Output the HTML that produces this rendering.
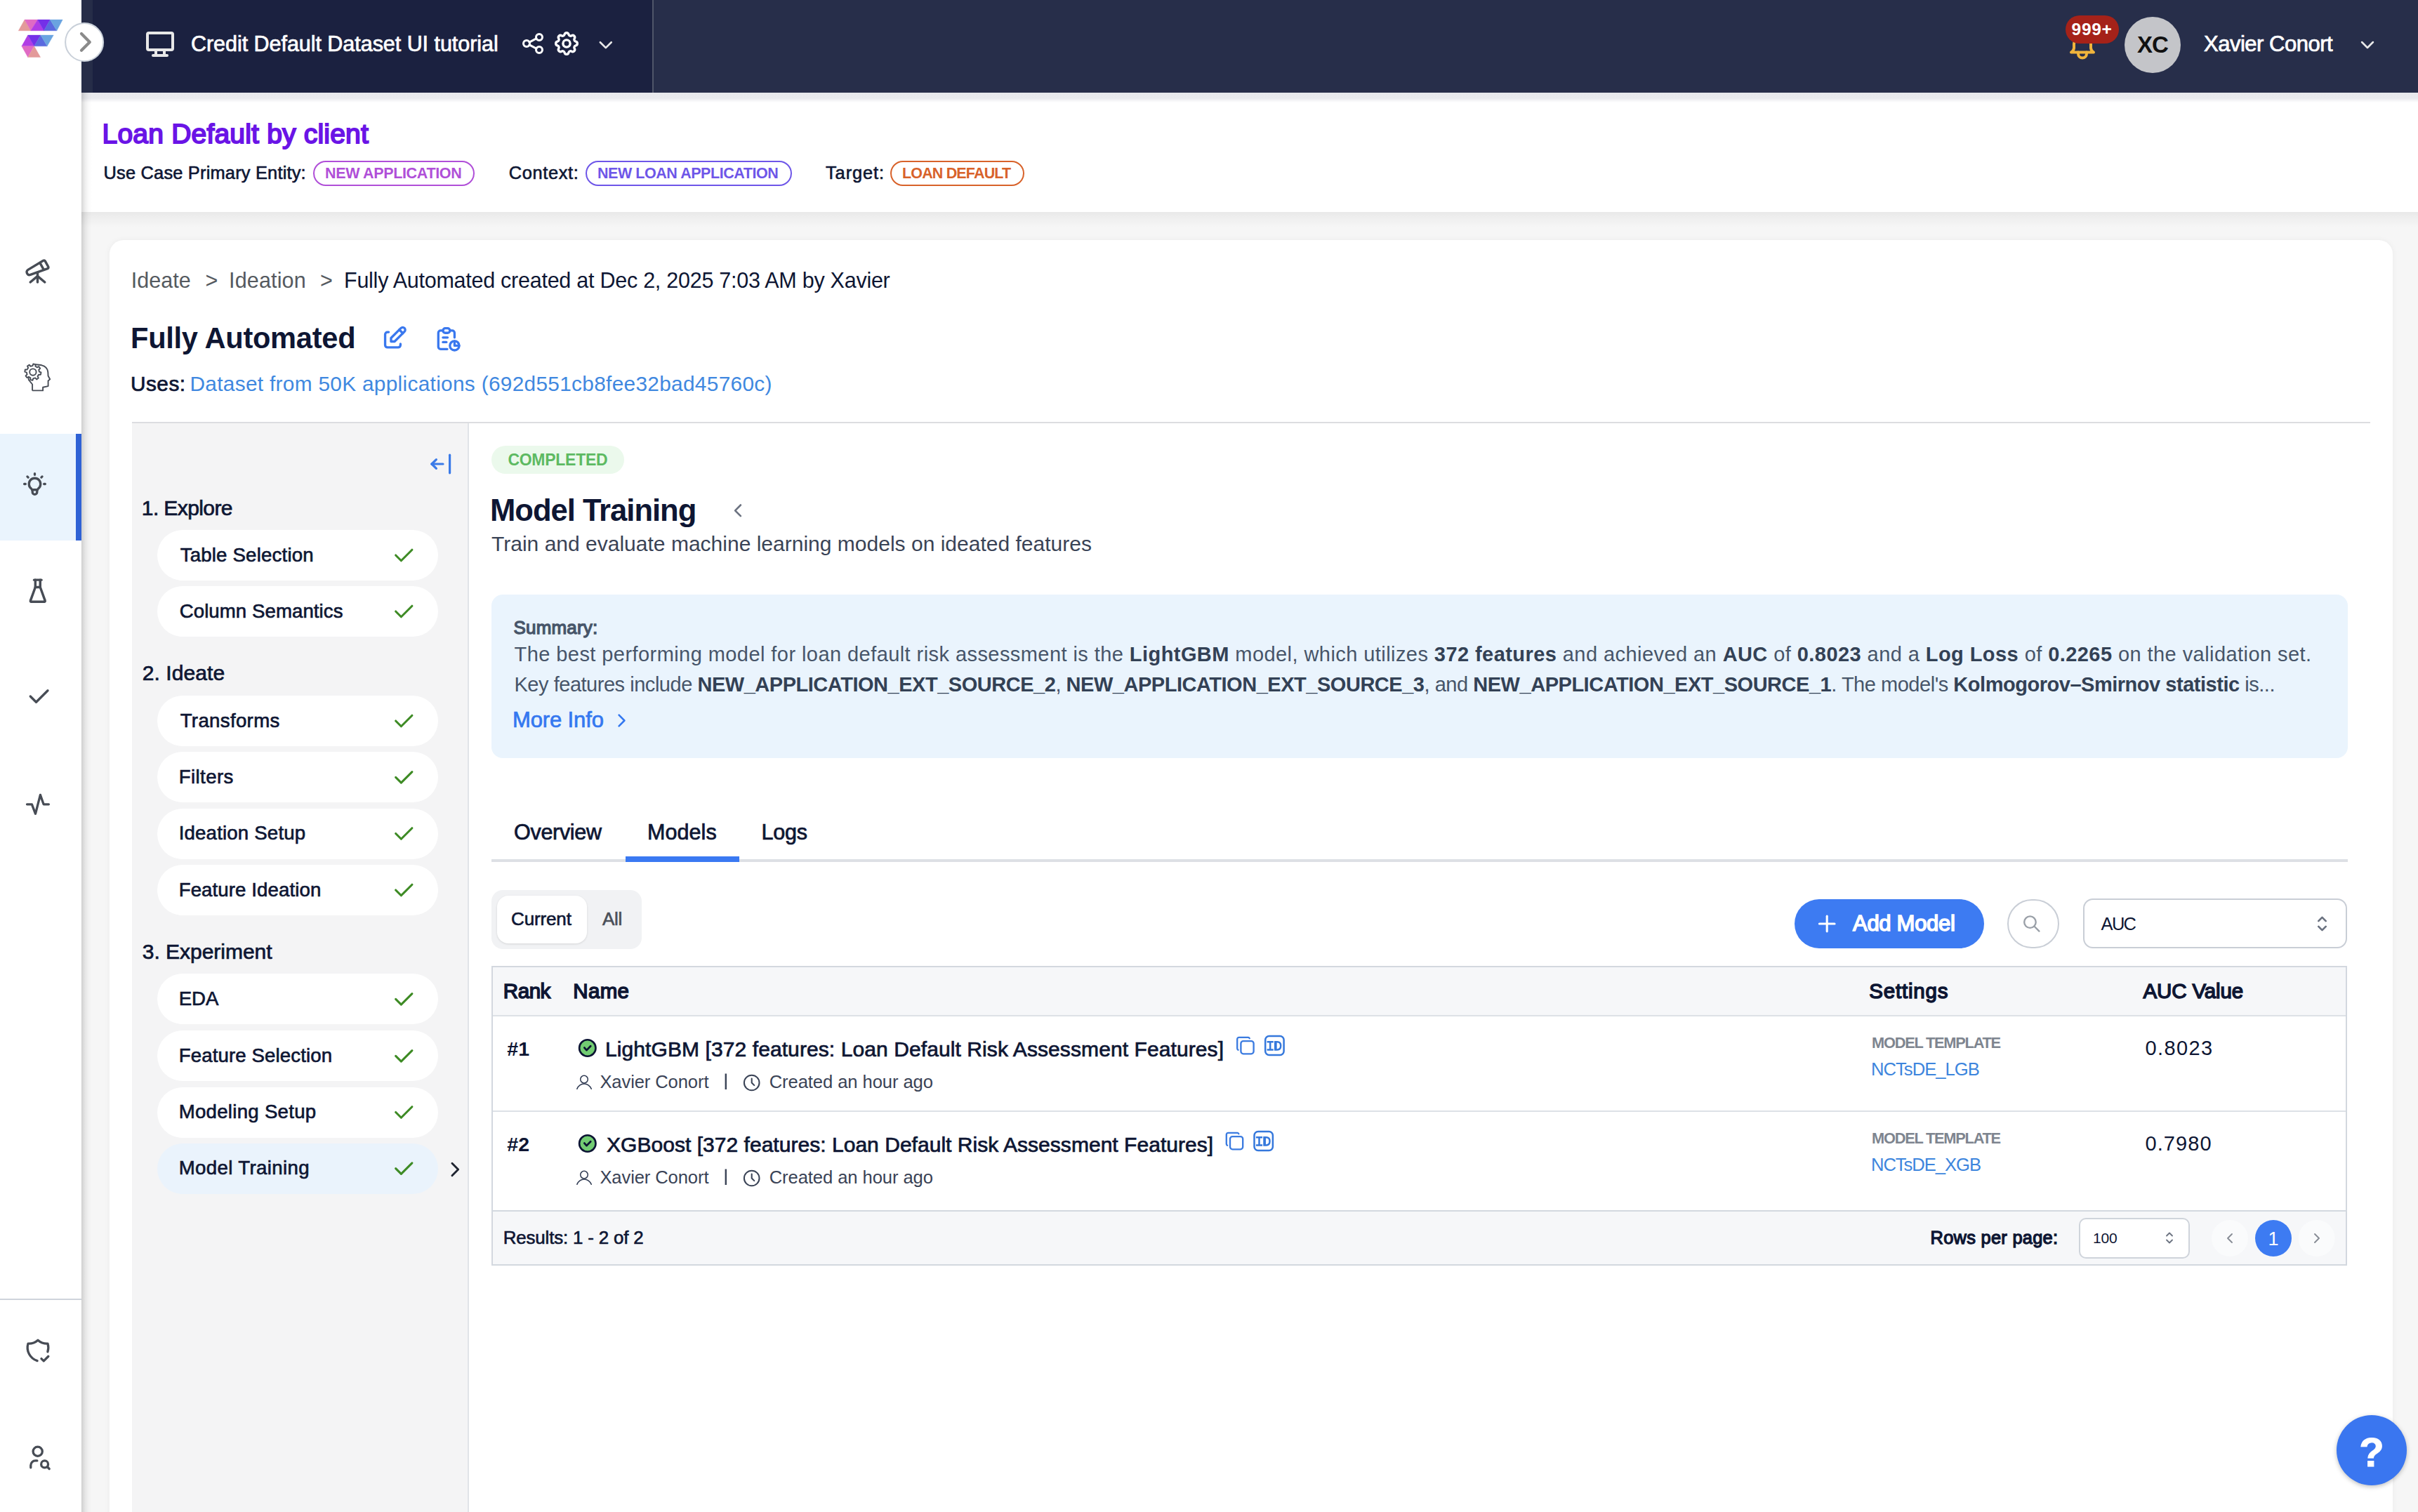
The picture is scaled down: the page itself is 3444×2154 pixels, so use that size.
<!DOCTYPE html>
<html><head><meta charset="utf-8"><style>
html,body{margin:0;padding:0;width:3444px;height:2154px;overflow:hidden;background:#f6f6f6}
body{position:relative;font-family:"Liberation Sans",sans-serif}
.b{position:absolute}
.t{position:absolute;line-height:0;white-space:nowrap}
.ov{position:absolute;left:0;top:0}
</style></head><body>

<div class="b" style="left:0;top:0;width:3444px;height:2154px;background:#f6f6f6"></div>
<div class="b" style="left:156px;top:342px;width:3252px;height:1900px;background:#fff;border-radius:20px;box-shadow:0 0 8px rgba(0,0,0,0.05)"></div>
<div class="b" style="left:116px;top:132px;width:3328px;height:170px;background:#fff"></div>
<div class="b" style="left:116px;top:302px;width:3328px;height:22px;background:linear-gradient(to bottom,rgba(0,0,0,0.055) 0,rgba(0,0,0,0.03) 8px,rgba(0,0,0,0) 22px)"></div>
<div class="b" style="left:116px;top:0;width:3328px;height:132px;background:#1b2140"></div>
<div class="b" style="left:116px;top:132px;width:3328px;height:14px;background:linear-gradient(to bottom,#e7e8ec 0,#e9eaee 8px,rgba(236,237,240,0) 14px)"></div>
<div class="b" style="left:116px;top:0;width:16px;height:132px;background:#262d48"></div>
<div class="b" style="left:931px;top:0;width:2513px;height:132px;background:#272e4a"></div>
<div class="b" style="left:929px;top:0;width:2px;height:132px;background:#50566a"></div>
<div class="b" style="left:0;top:0;width:116px;height:2154px;background:#fff"></div>
<div class="b" style="left:116px;top:132px;width:16px;height:2022px;background:linear-gradient(to right,rgba(0,0,0,0.16) 0,rgba(0,0,0,0.07) 5px,rgba(0,0,0,0.02) 10px,rgba(0,0,0,0) 15px)"></div>
<div class="b" style="left:0;top:617.5px;width:108px;height:152px;background:#eaf4fd"></div>
<div class="b" style="left:108px;top:617.5px;width:8px;height:152px;background:#2f62d5"></div>
<div class="b" style="left:0;top:1849.5px;width:116px;height:2px;background:#cfd4dc"></div>
<!-- badges -->
<div class="b" style="left:446px;top:229px;width:230px;height:36px;border:2.4px solid #b04fd8;border-radius:20px;box-sizing:border-box"></div>
<div class="b" style="left:834px;top:229px;width:293.5px;height:36px;border:2.4px solid #6e56e8;border-radius:20px;box-sizing:border-box"></div>
<div class="b" style="left:1268px;top:229px;width:190.6px;height:36px;border:2.4px solid #d8622a;border-radius:20px;box-sizing:border-box"></div>
<!-- card divider and stepper panel -->
<div class="b" style="left:188px;top:600.5px;width:3188px;height:2px;background:#dcdde0"></div>
<div class="b" style="left:188px;top:602.5px;width:478px;height:1600px;background:#f4f4f5"></div>
<div class="b" style="left:665.5px;top:602.5px;width:2.5px;height:1600px;background:#e1e4e8"></div>
<div class="b" style="left:223.6px;top:755.0px;width:400px;height:72px;border-radius:36px;background:#ffffff"></div>
<div class="b" style="left:223.6px;top:835.0px;width:400px;height:72px;border-radius:36px;background:#ffffff"></div>
<div class="b" style="left:223.6px;top:991.0px;width:400px;height:72px;border-radius:36px;background:#ffffff"></div>
<div class="b" style="left:223.6px;top:1071.3px;width:400px;height:72px;border-radius:36px;background:#ffffff"></div>
<div class="b" style="left:223.6px;top:1151.5px;width:400px;height:72px;border-radius:36px;background:#ffffff"></div>
<div class="b" style="left:223.6px;top:1232.0px;width:400px;height:72px;border-radius:36px;background:#ffffff"></div>
<div class="b" style="left:223.6px;top:1387.3px;width:400px;height:72px;border-radius:36px;background:#ffffff"></div>
<div class="b" style="left:223.6px;top:1468.3px;width:400px;height:72px;border-radius:36px;background:#ffffff"></div>
<div class="b" style="left:223.6px;top:1548.5px;width:400px;height:72px;border-radius:36px;background:#ffffff"></div>
<div class="b" style="left:223.6px;top:1628.7px;width:400px;height:72px;border-radius:36px;background:#eaf3fc"></div>

<div class="b" style="left:700px;top:635px;width:188.6px;height:39.6px;border-radius:20px;background:#ebf9ec"></div>
<div class="b" style="left:700px;top:847px;width:2644px;height:233px;border-radius:16px;background:#eaf4fd"></div>
<div class="b" style="left:700px;top:1224px;width:2644px;height:4px;background:#dde0e5"></div>
<div class="b" style="left:891px;top:1220px;width:162px;height:8px;background:#3a79f2"></div>
<div class="b" style="left:700px;top:1268px;width:214px;height:84px;border-radius:16px;background:#f1f2f4"></div>
<div class="b" style="left:708px;top:1276px;width:128px;height:68px;border-radius:16px;background:#fff;box-shadow:0 1px 3px rgba(0,0,0,0.12)"></div>
<div class="b" style="left:2556px;top:1281px;width:270px;height:70px;border-radius:35px;background:#3d7bf2"></div>
<div class="b" style="left:2858.5px;top:1281px;width:74.5px;height:70px;border-radius:37px;border:2px solid #c9ced6;box-sizing:border-box;background:#fff"></div>
<div class="b" style="left:2966.5px;top:1280px;width:376.5px;height:71px;border-radius:14px;border:2px solid #c9ced6;box-sizing:border-box;background:#fff"></div>
<!-- table -->
<div class="b" style="left:700px;top:1376px;width:2643px;height:427px;border:2px solid #d3d8df;box-sizing:border-box;background:#fff"></div>
<div class="b" style="left:702px;top:1378px;width:2639px;height:68px;background:#f6f7f9"></div>
<div class="b" style="left:702px;top:1446px;width:2639px;height:2px;background:#dde1e6"></div>
<div class="b" style="left:702px;top:1581.6px;width:2639px;height:2px;background:#dde1e6"></div>
<div class="b" style="left:702px;top:1724px;width:2639px;height:2px;background:#d3d8df"></div>
<div class="b" style="left:702px;top:1726px;width:2639px;height:75px;background:#f6f7f9"></div>
<div class="b" style="left:2960.5px;top:1734.5px;width:158.5px;height:58.5px;border-radius:10px;border:2px solid #cfd4db;box-sizing:border-box;background:#fff"></div>
<!-- help -->
<div class="b" style="left:3328px;top:2016px;width:100px;height:100px;border-radius:50px;background:#3a76f0;box-shadow:0 2px 6px rgba(0,0,0,0.25)"></div>

<svg class="ov" width="3444" height="2154" viewBox="0 0 3444 2154"><path d="M26.25 43.8 L35.05 28.1 L43.8 43.8 Z" fill="#e39a9a" stroke="#e39a9a" stroke-width="0.4"/>
<path d="M35.05 28.1 L53.6 28.1 L43.8 43.8 Z" fill="#e06ac4" stroke="#e06ac4" stroke-width="0.4"/>
<path d="M43.8 43.8 L53.6 28.1 L62.6 43.8 Z" fill="#b03de5" stroke="#b03de5" stroke-width="0.4"/>
<path d="M53.6 28.1 L71.4 28.1 L62.6 43.8 Z" fill="#7430e8" stroke="#7430e8" stroke-width="0.4"/>
<path d="M62.6 43.8 L71.4 28.1 L80.9 43.8 Z" fill="#5a6adf" stroke="#5a6adf" stroke-width="0.4"/>
<path d="M71.4 28.1 L89.2 28.1 L80.9 43.8 Z" fill="#6aa4e0" stroke="#6aa4e0" stroke-width="0.4"/>
<path d="M30.9 65.8 L39.7 50.1 L48.7 65.8 Z" fill="#b03de5" stroke="#b03de5" stroke-width="0.4"/>
<path d="M39.7 50.1 L58 50.1 L48.7 65.8 Z" fill="#7430e8" stroke="#7430e8" stroke-width="0.4"/>
<path d="M48.7 65.8 L58 50.1 L67.2 65.8 Z" fill="#5a6adf" stroke="#5a6adf" stroke-width="0.4"/>
<path d="M58 50.1 L76.25 50.1 L67.2 65.8 Z" fill="#6aa4e0" stroke="#6aa4e0" stroke-width="0.4"/>
<path d="M30.9 65.8 L48.7 65.8 L39.7 81.6 Z" fill="#e06ac4" stroke="#e06ac4" stroke-width="0.4"/>
<path d="M48.7 65.8 L39.7 81.6 L57.6 81.6 Z" fill="#e39a9a" stroke="#e39a9a" stroke-width="0.4"/>
<circle cx="120.1" cy="60" r="27" fill="#fff" stroke="#c9d0d9" stroke-width="2"/>
<path d="M116 48.1 L127.8 60 L116 71.8" fill="none" stroke="#8a8a8a" stroke-width="4.2" stroke-linecap="round" stroke-linejoin="round"/>
<g transform="translate(204.00 39.00) scale(2.0000)" fill="none" stroke="#e8e8e8" stroke-width="2" stroke-linecap="round" stroke-linejoin="round" ><path d="M3 5a1 1 0 0 1 1 -1h16a1 1 0 0 1 1 1v10a1 1 0 0 1 -1 1h-16a1 1 0 0 1 -1 -1v-10z"/><path d="M7 20h10"/><path d="M9 16v4"/><path d="M15 16v4"/></g>
<g transform="translate(741.00 44.00) scale(1.5000)" fill="none" stroke="#ffffff" stroke-width="2" stroke-linecap="round" stroke-linejoin="round" ><path d="M6 12m-3 0a3 3 0 1 0 6 0a3 3 0 1 0 -6 0"/><path d="M18 6m-3 0a3 3 0 1 0 6 0a3 3 0 1 0 -6 0"/><path d="M18 18m-3 0a3 3 0 1 0 6 0a3 3 0 1 0 -6 0"/><path d="M8.7 10.7l6.6 -3.4"/><path d="M8.7 13.3l6.6 3.4"/></g>
<g transform="translate(786.60 41.60) scale(1.7000)" fill="none" stroke="#ffffff" stroke-width="2" stroke-linecap="round" stroke-linejoin="round" ><path d="M10.325 4.317c.426 -1.756 2.924 -1.756 3.35 0a1.724 1.724 0 0 0 2.573 1.066c1.543 -.94 3.31 .826 2.37 2.37a1.724 1.724 0 0 0 1.065 2.572c1.756 .426 1.756 2.924 0 3.35a1.724 1.724 0 0 0 -1.066 2.573c.94 1.543 -.826 3.31 -2.37 2.37a1.724 1.724 0 0 0 -2.572 1.065c-.426 1.756 -2.924 1.756 -3.35 0a1.724 1.724 0 0 0 -2.573 -1.066c-1.543 .94 -3.31 -.826 -2.37 -2.37a1.724 1.724 0 0 0 -1.065 -2.572c-1.756 -.426 -1.756 -2.924 0 -3.35a1.724 1.724 0 0 0 1.066 -2.573c-.94 -1.543 .826 -3.31 2.37 -2.37c1 .608 2.296 .07 2.572 -1.065z"/><path d="M9 12a3 3 0 1 0 6 0a3 3 0 0 0 -6 0"/></g>
<g transform="translate(846.96 48.36) scale(1.3200)" fill="none" stroke="#e8e8e8" stroke-width="2" stroke-linecap="round" stroke-linejoin="round" ><path d="M6 9l6 6l6 -6"/></g>
<g transform="translate(3356.16 48.16) scale(1.3200)" fill="none" stroke="#e8e8e8" stroke-width="2" stroke-linecap="round" stroke-linejoin="round" ><path d="M6 9l6 6l6 -6"/></g>
<g transform="translate(2942.00 40.50) scale(2.0000)" fill="none" stroke="#f0b43c" stroke-width="2" stroke-linecap="round" stroke-linejoin="round" ><path d="M10 5a2 2 0 1 1 4 0a7 7 0 0 1 4 6v3a4 4 0 0 0 2 3h-16a4 4 0 0 0 2 -3v-3a7 7 0 0 1 4 -6"/><path d="M9 17v1a3 3 0 0 0 6 0v-1"/></g>
<rect x="2942" y="22" width="76" height="40" rx="20" fill="#a52219"/>
<circle cx="3066" cy="64" r="40" fill="#c4c5c9"/>
<g transform="translate(32.86 365.86) scale(1.7200)" fill="none" stroke="#474c55" stroke-width="2" stroke-linecap="round" stroke-linejoin="round" ><path d="M6 21l6 -5l6 5"/><path d="M12 13v8"/><path d="M3.294 13.678l.166 .281c.52 .88 1.624 1.265 2.605 .91l14.242 -5.165a1.023 1.023 0 0 0 .565 -1.456l-2.62 -4.705a1.087 1.087 0 0 0 -1.447 -.42l-.056 .032l-12.694 7.618c-1.02 .613 -1.357 1.897 -.76 2.905z"/><path d="M14 5l3 5.5"/></g>
<path d="M46.1 556.4 V547.5 L40.9 541.1 L40.3 537.7" fill="none" stroke="#474c55" stroke-width="1.9" stroke-linejoin="round"/>
<path d="M50.4 519.2 C54 519.5 57 519.8 59.4 520.3 C64.5 521.5 67.5 525 68.2 529.5 C68.6 532 68.4 534 68.6 535.5 L71.2 540.2 L68.6 542.4 L68.6 550.1 L61.1 551.8 L61.1 556.4 L46.1 556.4" fill="none" stroke="#474c55" stroke-width="1.9" stroke-linejoin="round"/>
<path d="M55.89 529.63 L58.49 530.50 L57.93 533.68 L55.18 533.62 L53.59 536.12 L54.81 538.58 L52.17 540.44 L50.27 538.44 L47.37 539.09 L46.50 541.69 L43.32 541.13 L43.38 538.38 L40.88 536.79 L38.42 538.01 L36.56 535.37 L38.56 533.47 L37.91 530.57 L35.31 529.70 L35.87 526.52 L38.62 526.58 L40.21 524.08 L38.99 521.62 L41.63 519.76 L43.53 521.76 L46.43 521.11 L47.30 518.51 L50.48 519.07 L50.42 521.82 L52.92 523.41 L55.38 522.19 L57.24 524.83 L55.24 526.73 Z" fill="#fff" stroke="#474c55" stroke-width="1.9" stroke-linejoin="round"/>
<circle cx="46.9" cy="530.1" r="4.7" fill="none" stroke="#474c55" stroke-width="1.9"/>
<g transform="translate(29.70 669.70) scale(1.6500)" fill="none" stroke="#474c55" stroke-width="2" stroke-linecap="round" stroke-linejoin="round" ><path d="M3 12h1m8 -9v1m8 8h1m-15.4 -6.4l.7 .7m12.1 -.7l-.7 .7"/><path d="M9 16a5 5 0 1 1 6 0a3.5 3.5 0 0 0 -1 3a2 2 0 0 1 -4 0a3.5 3.5 0 0 0 -1 -3"/><path d="M9.7 17l4.6 0"/></g>
<g transform="translate(33.04 820.94) scale(1.7300)" fill="none" stroke="#474c55" stroke-width="2" stroke-linecap="round" stroke-linejoin="round" ><path d="M9 3l6 0"/><path d="M10 9l4 0"/><path d="M10 3v6l-4 11a.7 .7 0 0 0 .5 1h11a.7 .7 0 0 0 .5 -1l-4 -11v-6"/></g>
<g transform="translate(35.00 972.20) scale(1.6500)" fill="none" stroke="#474c55" stroke-width="2" stroke-linecap="round" stroke-linejoin="round" ><path d="M5 12l5 5l10 -10"/></g>
<path d="M38.5 1145.8 H45.4 L50.5 1159.3 L57.4 1132.4 L62.1 1145.8 H69.4" fill="none" stroke="#474c55" stroke-width="3.3" stroke-linecap="round" stroke-linejoin="round"/>
<g transform="translate(34.20 1904.20) scale(1.6500)" fill="none" stroke="#474c55" stroke-width="2" stroke-linecap="round" stroke-linejoin="round" ><path d="M11.46 20.846a12 12 0 0 1 -7.96 -14.846a12 12 0 0 0 8.5 -3a12 12 0 0 0 8.5 3a12 12 0 0 1 -.09 7.06"/><path d="M15 19l2 2l4 -4"/></g>
<g transform="translate(33.90 2056.20) scale(1.6500)" fill="none" stroke="#474c55" stroke-width="2" stroke-linecap="round" stroke-linejoin="round" ><path d="M8 7a4 4 0 1 0 8 0a4 4 0 0 0 -8 0"/><path d="M6 21v-2a4 4 0 0 1 4 -4h1.5"/><path d="M18 18m-3 0a3 3 0 1 0 6 0a3 3 0 1 0 -6 0"/><path d="M20.2 20.2l1.8 1.8"/></g>
<g transform="translate(541.84 461.34) scale(1.6800)" fill="none" stroke="#3a78ee" stroke-width="2" stroke-linecap="round" stroke-linejoin="round" ><path d="M7 7h-1a2 2 0 0 0 -2 2v9a2 2 0 0 0 2 2h9a2 2 0 0 0 2 -2v-1"/><path d="M20.385 6.585a2.1 2.1 0 0 0 -2.97 -2.97l-8.415 8.385v3h3l8.415 -8.415z"/><path d="M16 5l3 3"/></g>
<g transform="translate(617.70 462.70) scale(1.6500)" fill="none" stroke="#3a78ee" stroke-width="2" stroke-linecap="round" stroke-linejoin="round" ><path d="M8 5h-2a2 2 0 0 0 -2 2v12a2 2 0 0 0 2 2h5.697"/><path d="M18 14v4h4"/><path d="M18 11v-4a2 2 0 0 0 -2 -2h-2"/><path d="M8 3m0 2a2 2 0 0 1 2 -2h2a2 2 0 0 1 2 2v0a2 2 0 0 1 -2 2h-2a2 2 0 0 1 -2 -2z"/><path d="M18 18m-4 0a4 4 0 1 0 8 0a4 4 0 1 0 -8 0"/><path d="M8 11h4"/><path d="M8 15h3"/></g>
<g transform="translate(608.60 641.80) scale(1.6000)" fill="none" stroke="#3b7be8" stroke-width="2" stroke-linecap="round" stroke-linejoin="round" ><path d="M4 12l10 0"/><path d="M4 12l4 4"/><path d="M4 12l4 -4"/><path d="M20 4l0 16"/></g>
<g transform="translate(555.90 772.40) scale(1.5500)" fill="none" stroke="#3e8b25" stroke-width="2" stroke-linecap="round" stroke-linejoin="round" ><path d="M5 12l5 5l10 -10"/></g>
<g transform="translate(555.90 852.40) scale(1.5500)" fill="none" stroke="#3e8b25" stroke-width="2" stroke-linecap="round" stroke-linejoin="round" ><path d="M5 12l5 5l10 -10"/></g>
<g transform="translate(555.90 1008.40) scale(1.5500)" fill="none" stroke="#3e8b25" stroke-width="2" stroke-linecap="round" stroke-linejoin="round" ><path d="M5 12l5 5l10 -10"/></g>
<g transform="translate(555.90 1088.70) scale(1.5500)" fill="none" stroke="#3e8b25" stroke-width="2" stroke-linecap="round" stroke-linejoin="round" ><path d="M5 12l5 5l10 -10"/></g>
<g transform="translate(555.90 1168.90) scale(1.5500)" fill="none" stroke="#3e8b25" stroke-width="2" stroke-linecap="round" stroke-linejoin="round" ><path d="M5 12l5 5l10 -10"/></g>
<g transform="translate(555.90 1249.40) scale(1.5500)" fill="none" stroke="#3e8b25" stroke-width="2" stroke-linecap="round" stroke-linejoin="round" ><path d="M5 12l5 5l10 -10"/></g>
<g transform="translate(555.90 1404.70) scale(1.5500)" fill="none" stroke="#3e8b25" stroke-width="2" stroke-linecap="round" stroke-linejoin="round" ><path d="M5 12l5 5l10 -10"/></g>
<g transform="translate(555.90 1485.70) scale(1.5500)" fill="none" stroke="#3e8b25" stroke-width="2" stroke-linecap="round" stroke-linejoin="round" ><path d="M5 12l5 5l10 -10"/></g>
<g transform="translate(555.90 1565.90) scale(1.5500)" fill="none" stroke="#3e8b25" stroke-width="2" stroke-linecap="round" stroke-linejoin="round" ><path d="M5 12l5 5l10 -10"/></g>
<g transform="translate(555.90 1646.10) scale(1.5500)" fill="none" stroke="#3e8b25" stroke-width="2" stroke-linecap="round" stroke-linejoin="round" ><path d="M5 12l5 5l10 -10"/></g>
<g transform="translate(630.90 1648.60) scale(1.4500)" fill="none" stroke="#1f2430" stroke-width="2" stroke-linecap="round" stroke-linejoin="round" ><path d="M9 6l6 6l-6 6"/></g>
<g transform="translate(1035.40 711.70) scale(1.3000)" fill="none" stroke="#6b7280" stroke-width="2" stroke-linecap="round" stroke-linejoin="round" ><path d="M15 6l-6 6l6 6"/></g>
<g transform="translate(869.90 1010.90) scale(1.3000)" fill="none" stroke="#3478f0" stroke-width="2" stroke-linecap="round" stroke-linejoin="round" ><path d="M9 6l6 6l-6 6"/></g>
<g transform="translate(2583.60 1297.40) scale(1.5500)" fill="none" stroke="#ffffff" stroke-width="2" stroke-linecap="round" stroke-linejoin="round" ><path d="M12 5l0 14"/><path d="M5 12l14 0"/></g>
<g transform="translate(2879.64 1301.84) scale(1.1800)" fill="none" stroke="#9aa0a8" stroke-width="2" stroke-linecap="round" stroke-linejoin="round" ><path d="M10 10m-7 0a7 7 0 1 0 14 0a7 7 0 1 0 -14 0"/><path d="M21 21l-6 -6"/></g>
<g transform="translate(3291.90 1300.40) scale(1.3000)" fill="none" stroke="#6b7280" stroke-width="2" stroke-linecap="round" stroke-linejoin="round" ><path d="M8 9l4 -4l4 4"/><path d="M16 15l-4 4l-4 -4"/></g>
<circle cx="836.8" cy="1493.0" r="11.7" fill="#72cc72" stroke="#0c1433" stroke-width="2.6"/>
<path d="M832.4 1492.6 L835.5 1496.1 L841.2 1490.2" fill="none" stroke="#0c1433" stroke-width="2.8" stroke-linecap="round" stroke-linejoin="round"/>
<circle cx="832" cy="1537.6" r="5.3" fill="none" stroke="#2f3a52" stroke-width="1.5"/>
<path d="M821.9 1551.2 C824 1546.5 828 1544.0 832 1544.0 C836 1544.0 840 1546.5 842.2 1551.2" fill="none" stroke="#2f3a52" stroke-width="1.6" stroke-linecap="round"/>
<rect x="1032.6" y="1529.5" width="2.4" height="22.5" fill="#3a4356"/>
<g transform="translate(1056.30 1528.10) scale(1.2000)" fill="none" stroke="#3a4356" stroke-width="1.7" stroke-linecap="round" stroke-linejoin="round" ><path d="M3 12a9 9 0 1 0 18 0a9 9 0 0 0 -18 0"/><path d="M12 7v5l3 3"/></g>
<circle cx="836.8" cy="1629.0" r="11.7" fill="#72cc72" stroke="#0c1433" stroke-width="2.6"/>
<path d="M832.4 1628.6 L835.5 1632.1 L841.2 1626.2" fill="none" stroke="#0c1433" stroke-width="2.8" stroke-linecap="round" stroke-linejoin="round"/>
<circle cx="832" cy="1673.6" r="5.3" fill="none" stroke="#2f3a52" stroke-width="1.5"/>
<path d="M821.9 1687.2 C824 1682.5 828 1680.0 832 1680.0 C836 1680.0 840 1682.5 842.2 1687.2" fill="none" stroke="#2f3a52" stroke-width="1.6" stroke-linecap="round"/>
<rect x="1032.6" y="1665.5" width="2.4" height="22.5" fill="#3a4356"/>
<g transform="translate(1056.30 1664.10) scale(1.2000)" fill="none" stroke="#3a4356" stroke-width="1.7" stroke-linecap="round" stroke-linejoin="round" ><path d="M3 12a9 9 0 1 0 18 0a9 9 0 0 0 -18 0"/><path d="M12 7v5l3 3"/></g>
<g transform="translate(1758.30 1474.00) scale(1.3000)" fill="none" stroke="#3b7be0" stroke-width="1.8" stroke-linecap="round" stroke-linejoin="round" ><path d="M7 7m0 2.667a2.667 2.667 0 0 1 2.667 -2.667h8.666a2.667 2.667 0 0 1 2.667 2.667v8.666a2.667 2.667 0 0 1 -2.667 2.667h-8.666a2.667 2.667 0 0 1 -2.667 -2.667z"/><path d="M4.012 16.737a2.005 2.005 0 0 1 -1.012 -1.737v-10c0 -1.1 .9 -2 2 -2h10c.75 0 1.158 .385 1.5 1"/></g>
<rect x="1802.2" y="1476.1" width="26.4" height="26.8" rx="5.5" fill="none" stroke="#3578dc" stroke-width="2.5"/>
<g transform="translate(0.0 0.0)" fill="none" stroke="#3578dc" stroke-width="2.5" stroke-linecap="butt"><path d="M1804.6 1484.2 H1813.8 M1804.6 1495.4 H1813.8 M1809.2 1484.2 V1495.4"/><path d="M1816.2 1484.2 H1819.2 Q1824.2 1484.2 1824.2 1489.8 Q1824.2 1495.4 1819.2 1495.4 H1816.2 Z M1817.4 1484.2 V1495.4"/></g>
<g transform="translate(1742.90 1610.00) scale(1.3000)" fill="none" stroke="#3b7be0" stroke-width="1.8" stroke-linecap="round" stroke-linejoin="round" ><path d="M7 7m0 2.667a2.667 2.667 0 0 1 2.667 -2.667h8.666a2.667 2.667 0 0 1 2.667 2.667v8.666a2.667 2.667 0 0 1 -2.667 2.667h-8.666a2.667 2.667 0 0 1 -2.667 -2.667z"/><path d="M4.012 16.737a2.005 2.005 0 0 1 -1.012 -1.737v-10c0 -1.1 .9 -2 2 -2h10c.75 0 1.158 .385 1.5 1"/></g>
<rect x="1786.5" y="1612.1" width="26.4" height="26.8" rx="5.5" fill="none" stroke="#3578dc" stroke-width="2.5"/>
<g transform="translate(-15.7 136.0)" fill="none" stroke="#3578dc" stroke-width="2.5" stroke-linecap="butt"><path d="M1804.6 1484.2 H1813.8 M1804.6 1495.4 H1813.8 M1809.2 1484.2 V1495.4"/><path d="M1816.2 1484.2 H1819.2 Q1824.2 1484.2 1824.2 1489.8 Q1824.2 1495.4 1819.2 1495.4 H1816.2 Z M1817.4 1484.2 V1495.4"/></g>
<g transform="translate(3078.00 1751.50) scale(1.0000)" fill="none" stroke="#6b7280" stroke-width="1.8" stroke-linecap="round" stroke-linejoin="round" ><path d="M8 9l4 -4l4 4"/><path d="M16 15l-4 4l-4 -4"/></g>
<circle cx="3176" cy="1764" r="26" fill="#fafbfc"/>
<circle cx="3299.6" cy="1764" r="26" fill="#fafbfc"/>
<g transform="translate(3164.00 1752.00) scale(1.0000)" fill="none" stroke="#878c95" stroke-width="1.9" stroke-linecap="round" stroke-linejoin="round" ><path d="M15 6l-6 6l6 6"/></g>
<g transform="translate(3288.00 1752.00) scale(1.0000)" fill="none" stroke="#878c95" stroke-width="1.9" stroke-linecap="round" stroke-linejoin="round" ><path d="M9 6l6 6l-6 6"/></g>
<circle cx="3238" cy="1764" r="26" fill="#3d7bf2"/></svg>
<div class="t" id="t0" style="left:272.00px;top:62.43px;font-size:30.50px;color:#ffffff;-webkit-text-stroke:0.73px #ffffff;letter-spacing:-0.039px;"><span>Credit Default Dataset UI tutorial</span></div>
<div class="t" id="t1" style="left:3139.00px;top:62.86px;font-size:31.00px;color:#ffffff;-webkit-text-stroke:0.74px #ffffff;letter-spacing:-0.493px;"><span>Xavier Conort</span></div>
<div class="t" id="t2" style="left:2950.60px;top:42.11px;font-size:24.50px;color:#ffffff;font-weight:700;letter-spacing:0.708px;"><span>999+</span></div>
<div class="t" id="t3" style="left:3044.00px;top:63.57px;font-size:33.00px;color:#111111;font-weight:700;letter-spacing:-1.011px;"><span>XC</span></div>
<div class="t" id="t4" style="left:145.60px;top:191.19px;font-size:39.00px;color:#6a14e6;-webkit-text-stroke:1.95px #6a14e6;letter-spacing:0.198px;"><span>Loan Default by client</span></div>
<div class="t" id="t5" style="left:147.60px;top:246.20px;font-size:25.40px;color:#0e1633;-webkit-text-stroke:0.61px #0e1633;letter-spacing:0.194px;"><span>Use Case Primary Entity:</span></div>
<div class="t" id="t6" style="left:463.00px;top:246.55px;font-size:21.50px;color:#b04fd8;font-weight:700;letter-spacing:-0.338px;"><span>NEW APPLICATION</span></div>
<div class="t" id="t7" style="left:724.80px;top:246.20px;font-size:25.40px;color:#0e1633;-webkit-text-stroke:0.61px #0e1633;letter-spacing:0.642px;"><span>Context:</span></div>
<div class="t" id="t8" style="left:851.00px;top:246.55px;font-size:21.50px;color:#6e56e8;font-weight:700;letter-spacing:-0.454px;"><span>NEW LOAN APPLICATION</span></div>
<div class="t" id="t9" style="left:1176.00px;top:246.20px;font-size:25.40px;color:#0e1633;-webkit-text-stroke:0.61px #0e1633;letter-spacing:0.905px;"><span>Target:</span></div>
<div class="t" id="t10" style="left:1285.00px;top:246.55px;font-size:21.50px;color:#d8622a;font-weight:700;letter-spacing:-0.844px;"><span>LOAN DEFAULT</span></div>
<div class="t" id="t11" style="left:186.80px;top:399.43px;font-size:30.50px;color:#555a60;letter-spacing:0.033px;"><span>Ideate</span></div>
<div class="t" id="t12" style="left:292.50px;top:399.43px;font-size:30.50px;color:#555a60;"><span>&gt;</span></div>
<div class="t" id="t13" style="left:326.00px;top:399.43px;font-size:30.50px;color:#555a60;letter-spacing:0.161px;"><span>Ideation</span></div>
<div class="t" id="t14" style="left:456.00px;top:399.43px;font-size:30.50px;color:#555a60;"><span>&gt;</span></div>
<div class="t" id="t15" style="left:490.00px;top:399.43px;font-size:30.50px;color:#0e1633;letter-spacing:-0.254px;"><span>Fully Automated created at Dec 2, 2025 7:03 AM by Xavier</span></div>
<div class="t" id="t16" style="left:186.00px;top:481.59px;font-size:41.60px;color:#0e1633;font-weight:700;letter-spacing:-0.266px;"><span>Fully Automated</span></div>
<div class="t" id="t17" style="left:186.00px;top:547.17px;font-size:29.80px;color:#0e1633;-webkit-text-stroke:0.72px #0e1633;letter-spacing:0.478px;"><span>Uses:</span></div>
<div class="t" id="t18" style="left:270.50px;top:547.17px;font-size:29.80px;color:#4088e0;letter-spacing:0.313px;"><span>Dataset from 50K applications (692d551cb8fee32bad45760c)</span></div>
<div class="t" id="t19" style="left:201.80px;top:724.00px;font-size:30.00px;color:#0e1633;-webkit-text-stroke:0.72px #0e1633;letter-spacing:-0.599px;"><span>1. Explore</span></div>
<div class="t" id="t20" style="left:202.80px;top:959.21px;font-size:30.00px;color:#0e1633;-webkit-text-stroke:0.72px #0e1633;letter-spacing:0.065px;"><span>2. Ideate</span></div>
<div class="t" id="t21" style="left:202.80px;top:1356.40px;font-size:30.00px;color:#0e1633;-webkit-text-stroke:0.72px #0e1633;letter-spacing:-0.029px;"><span>3. Experiment</span></div>
<div class="t" id="t22" style="left:256.70px;top:790.64px;font-size:27.60px;color:#0e1633;-webkit-text-stroke:0.66px #0e1633;letter-spacing:0.200px;"><span>Table Selection</span></div>
<div class="t" id="t23" style="left:255.70px;top:870.64px;font-size:27.60px;color:#0e1633;-webkit-text-stroke:0.66px #0e1633;letter-spacing:0.082px;"><span>Column Semantics</span></div>
<div class="t" id="t24" style="left:256.70px;top:1026.64px;font-size:27.60px;color:#0e1633;-webkit-text-stroke:0.66px #0e1633;letter-spacing:0.345px;"><span>Transforms</span></div>
<div class="t" id="t25" style="left:254.70px;top:1106.94px;font-size:27.60px;color:#0e1633;-webkit-text-stroke:0.66px #0e1633;letter-spacing:0.430px;"><span>Filters</span></div>
<div class="t" id="t26" style="left:254.70px;top:1187.14px;font-size:27.60px;color:#0e1633;-webkit-text-stroke:0.66px #0e1633;letter-spacing:0.190px;"><span>Ideation Setup</span></div>
<div class="t" id="t27" style="left:254.70px;top:1267.64px;font-size:27.60px;color:#0e1633;-webkit-text-stroke:0.66px #0e1633;letter-spacing:0.106px;"><span>Feature Ideation</span></div>
<div class="t" id="t28" style="left:254.70px;top:1422.94px;font-size:27.60px;color:#0e1633;-webkit-text-stroke:0.66px #0e1633;"><span>EDA</span></div>
<div class="t" id="t29" style="left:254.70px;top:1503.94px;font-size:27.60px;color:#0e1633;-webkit-text-stroke:0.66px #0e1633;letter-spacing:0.136px;"><span>Feature Selection</span></div>
<div class="t" id="t30" style="left:254.70px;top:1584.14px;font-size:27.60px;color:#0e1633;-webkit-text-stroke:0.66px #0e1633;letter-spacing:0.284px;"><span>Modeling Setup</span></div>
<div class="t" id="t31" style="left:254.70px;top:1664.34px;font-size:27.60px;color:#0e1633;-webkit-text-stroke:0.66px #0e1633;letter-spacing:0.381px;"><span>Model Training</span></div>
<div class="t" id="t32" style="left:723.40px;top:655.03px;font-size:23.00px;color:#5dba62;font-weight:700;letter-spacing:-0.273px;"><span>COMPLETED</span></div>
<div class="t" id="t33" style="left:698.00px;top:726.89px;font-size:43.60px;color:#0e1633;font-weight:700;letter-spacing:-1.020px;"><span>Model Training</span></div>
<div class="t" id="t34" style="left:700.00px;top:775.40px;font-size:30.00px;color:#3a4356;letter-spacing:0.009px;"><span>Train and evaluate machine learning models on ideated features</span></div>
<div class="t" id="t35" style="left:731.50px;top:894.29px;font-size:26.00px;color:#475569;-webkit-text-stroke:1.30px #475569;letter-spacing:0.181px;"><span>Summary:</span></div>
<div class="t" id="t36" style="left:732.50px;top:931.95px;font-size:29.00px;color:#475569;letter-spacing:0.432px;"><span>The best performing model for loan default risk assessment is the <b style="color:#334155">LightGBM</b> model, which utilizes <b style="color:#334155">372 features</b> and achieved an <b style="color:#334155">AUC</b> of <b style="color:#334155">0.8023</b> and a <b style="color:#334155">Log Loss</b> of <b style="color:#334155">0.2265</b> on the validation set.</span></div>
<div class="t" id="t37" style="left:732.50px;top:974.75px;font-size:29.00px;color:#475569;letter-spacing:-0.472px;"><span>Key features include <b style="color:#334155">NEW_APPLICATION_EXT_SOURCE_2</b>, <b style="color:#334155">NEW_APPLICATION_EXT_SOURCE_3</b>, and <b style="color:#334155">NEW_APPLICATION_EXT_SOURCE_1</b>. The model's <b style="color:#334155">Kolmogorov–Smirnov statistic</b> is...</span></div>
<div class="t" id="t38" style="left:730.00px;top:1026.06px;font-size:31.00px;color:#3478f0;-webkit-text-stroke:0.74px #3478f0;letter-spacing:-0.126px;"><span>More Info</span></div>
<div class="t" id="t39" style="left:732.00px;top:1185.43px;font-size:30.50px;color:#0e1633;-webkit-text-stroke:0.73px #0e1633;letter-spacing:-0.297px;"><span>Overview</span></div>
<div class="t" id="t40" style="left:922.00px;top:1185.43px;font-size:30.50px;color:#0e1633;-webkit-text-stroke:0.73px #0e1633;letter-spacing:0.066px;"><span>Models</span></div>
<div class="t" id="t41" style="left:1084.50px;top:1185.43px;font-size:30.50px;color:#0e1633;-webkit-text-stroke:0.73px #0e1633;letter-spacing:-0.229px;"><span>Logs</span></div>
<div class="t" id="t42" style="left:728.00px;top:1309.39px;font-size:26.00px;color:#0e1633;-webkit-text-stroke:0.62px #0e1633;letter-spacing:-0.129px;"><span>Current</span></div>
<div class="t" id="t43" style="left:858.00px;top:1309.39px;font-size:26.00px;color:#4a4f58;-webkit-text-stroke:0.62px #4a4f58;letter-spacing:-0.309px;"><span>All</span></div>
<div class="t" id="t44" style="left:2639.00px;top:1315.96px;font-size:31.00px;color:#ffffff;-webkit-text-stroke:1.55px #ffffff;letter-spacing:-0.290px;"><span>Add Model</span></div>
<div class="t" id="t45" style="left:2992.60px;top:1315.76px;font-size:25.50px;color:#0e1633;letter-spacing:-1.712px;"><span>AUC</span></div>
<div class="t" id="t46" style="left:716.80px;top:1412.08px;font-size:29.50px;color:#0e1633;-webkit-text-stroke:1.48px #0e1633;letter-spacing:-0.439px;"><span>Rank</span></div>
<div class="t" id="t47" style="left:816.30px;top:1412.08px;font-size:29.50px;color:#0e1633;-webkit-text-stroke:1.48px #0e1633;letter-spacing:0.339px;"><span>Name</span></div>
<div class="t" id="t48" style="left:2662.30px;top:1412.08px;font-size:29.50px;color:#0e1633;-webkit-text-stroke:1.48px #0e1633;letter-spacing:0.808px;"><span>Settings</span></div>
<div class="t" id="t49" style="left:3052.40px;top:1412.08px;font-size:29.50px;color:#0e1633;-webkit-text-stroke:1.48px #0e1633;letter-spacing:-0.117px;"><span>AUC Value</span></div>
<div class="t" id="t50" style="left:722.30px;top:1493.72px;font-size:28.50px;color:#0e1633;font-weight:700;"><span>#1</span></div>
<div class="t" id="t51" style="left:862.00px;top:1495.31px;font-size:30.00px;color:#0e1633;-webkit-text-stroke:0.72px #0e1633;letter-spacing:0.091px;"><span>LightGBM [372 features: Loan Default Risk Assessment Features]</span></div>
<div class="t" id="t52" style="left:854.40px;top:1541.13px;font-size:25.60px;color:#3a4356;letter-spacing:-0.114px;"><span>Xavier Conort</span></div>
<div class="t" id="t53" style="left:1095.70px;top:1541.13px;font-size:25.60px;color:#3a4356;letter-spacing:-0.086px;"><span>Created an hour ago</span></div>
<div class="t" id="t54" style="left:2666.00px;top:1485.65px;font-size:21.80px;color:#7e858f;font-weight:700;letter-spacing:-1.235px;"><span>MODEL TEMPLATE</span></div>
<div class="t" id="t55" style="left:2665.00px;top:1523.13px;font-size:25.60px;color:#3d85dd;letter-spacing:-0.977px;"><span>NCTsDE_LGB</span></div>
<div class="t" id="t56" style="left:3055.50px;top:1492.85px;font-size:29.00px;color:#0e1633;letter-spacing:1.386px;"><span>0.8023</span></div>
<div class="t" id="t57" style="left:722.30px;top:1629.72px;font-size:28.50px;color:#0e1633;font-weight:700;"><span>#2</span></div>
<div class="t" id="t58" style="left:864.00px;top:1631.31px;font-size:30.00px;color:#0e1633;-webkit-text-stroke:0.72px #0e1633;letter-spacing:0.033px;"><span>XGBoost [372 features: Loan Default Risk Assessment Features]</span></div>
<div class="t" id="t59" style="left:854.40px;top:1677.13px;font-size:25.60px;color:#3a4356;letter-spacing:-0.114px;"><span>Xavier Conort</span></div>
<div class="t" id="t60" style="left:1095.70px;top:1677.13px;font-size:25.60px;color:#3a4356;letter-spacing:-0.086px;"><span>Created an hour ago</span></div>
<div class="t" id="t61" style="left:2666.00px;top:1621.65px;font-size:21.80px;color:#7e858f;font-weight:700;letter-spacing:-1.235px;"><span>MODEL TEMPLATE</span></div>
<div class="t" id="t62" style="left:2665.00px;top:1659.13px;font-size:25.60px;color:#3d85dd;letter-spacing:-1.047px;"><span>NCTsDE_XGB</span></div>
<div class="t" id="t63" style="left:3055.50px;top:1628.85px;font-size:29.00px;color:#0e1633;letter-spacing:1.086px;"><span>0.7980</span></div>
<div class="t" id="t64" style="left:716.80px;top:1763.43px;font-size:25.90px;color:#0e1633;-webkit-text-stroke:0.62px #0e1633;letter-spacing:-0.167px;"><span>Results: 1 - 2 of 2</span></div>
<div class="t" id="t65" style="left:2749.60px;top:1763.20px;font-size:25.40px;color:#0e1633;-webkit-text-stroke:1.27px #0e1633;letter-spacing:0.279px;"><span>Rows per page:</span></div>
<div class="t" id="t66" style="left:2981.00px;top:1764.02px;font-size:21.00px;color:#0e1633;letter-spacing:-0.179px;"><span>100</span></div>

<div class="t" style="left:3230px;top:1764.6px;font-size:27px;color:#fff;width:16px;text-align:center">1</div>
<div class="t" style="left:3353px;top:2068.9px;font-size:58px;font-weight:700;color:#fff;width:50px;text-align:center;-webkit-text-stroke:1px #fff">?</div>

</body></html>
